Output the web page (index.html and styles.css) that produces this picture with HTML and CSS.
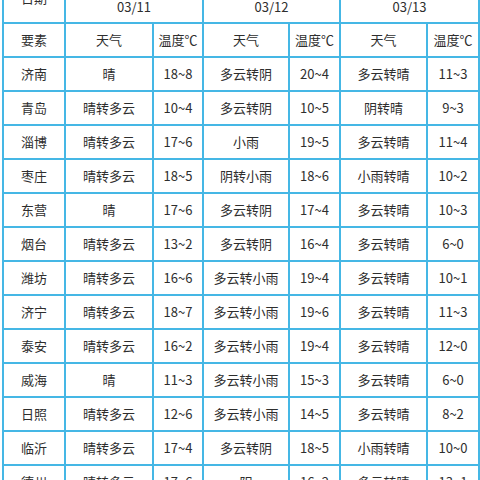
FILE: index.html
```html
<!DOCTYPE html>
<html lang="zh">
<head>
<meta charset="utf-8">
<link rel="stylesheet" href="styles.css">
</head>
<body>
<table class="wx">
<colgroup>
<col class="c-city"><col class="c-w1"><col class="c-t1"><col class="c-w2"><col class="c-t2"><col class="c-w3"><col class="c-t3">
</colgroup>
<tbody>
<tr class="date-row"><td class="date-label">日期</td><td colspan="2">03/11</td><td colspan="2">03/12</td><td colspan="2">03/13</td></tr>
<tr><td>要素</td><td>天气</td><td>温度℃</td><td>天气</td><td>温度℃</td><td>天气</td><td>温度℃</td></tr>
<tr><td>济南</td><td>晴</td><td>18~8</td><td>多云转阴</td><td>20~4</td><td>多云转晴</td><td>11~3</td></tr>
<tr><td>青岛</td><td>晴转多云</td><td>10~4</td><td>多云转阴</td><td>10~5</td><td>阴转晴</td><td>9~3</td></tr>
<tr><td>淄博</td><td>晴转多云</td><td>17~6</td><td>小雨</td><td>19~5</td><td>多云转晴</td><td>11~4</td></tr>
<tr><td>枣庄</td><td>晴转多云</td><td>18~5</td><td>阴转小雨</td><td>18~6</td><td>小雨转晴</td><td>10~2</td></tr>
<tr><td>东营</td><td>晴</td><td>17~6</td><td>多云转阴</td><td>17~4</td><td>多云转晴</td><td>10~3</td></tr>
<tr><td>烟台</td><td>晴转多云</td><td>13~2</td><td>多云转阴</td><td>16~4</td><td>多云转晴</td><td>6~0</td></tr>
<tr><td>潍坊</td><td>晴转多云</td><td>16~6</td><td>多云转小雨</td><td>19~4</td><td>多云转晴</td><td>10~1</td></tr>
<tr><td>济宁</td><td>晴转多云</td><td>18~7</td><td>多云转小雨</td><td>19~6</td><td>多云转晴</td><td>11~3</td></tr>
<tr><td>泰安</td><td>晴转多云</td><td>16~2</td><td>多云转小雨</td><td>19~4</td><td>多云转晴</td><td>12~0</td></tr>
<tr><td>威海</td><td>晴</td><td>11~3</td><td>多云转小雨</td><td>15~3</td><td>多云转晴</td><td>6~0</td></tr>
<tr><td>日照</td><td>晴转多云</td><td>12~6</td><td>多云转小雨</td><td>14~5</td><td>多云转晴</td><td>8~2</td></tr>
<tr><td>临沂</td><td>晴转多云</td><td>17~4</td><td>多云转阴</td><td>18~5</td><td>小雨转晴</td><td>10~0</td></tr>
<tr><td>德州</td><td>晴转多云</td><td>17~6</td><td>阴</td><td>16~2</td><td>多云转晴</td><td>13~1</td></tr>
</tbody>
</table>
</body>
</html>
```
FILE: styles.css
```css
html, body {
  margin: 0;
  padding: 0;
  background: #ffffff;
}
body {
  overflow: hidden;
  height: 480px;
}
.wx {
  border-collapse: collapse;
  table-layout: fixed;
  width: 476px;
  margin: -12px 0 0 2px;
  font-family: "Noto Sans CJK SC", "Noto Sans", sans-serif;
  font-size: 13px;
  color: #2e2e2e;
}
.c-city { width: 62px; }
.c-w1 { width: 88px; }
.c-t1 { width: 50px; }
.c-w2 { width: 86px; }
.c-t2 { width: 51px; }
.c-w3 { width: 87px; }
.c-t3 { width: 52px; }
.wx td {
  border: 2px solid #45b7e5;
  height: 32px;
  padding: 0;
  text-align: center;
  vertical-align: middle;
  white-space: nowrap;
  line-height: 16px;
}
.wx .date-row td {
  padding-top: 2px;
  height: 30px;
}
.wx td.date-label {
  vertical-align: top;
  padding-top: 0;
  height: 32px;
}
```
